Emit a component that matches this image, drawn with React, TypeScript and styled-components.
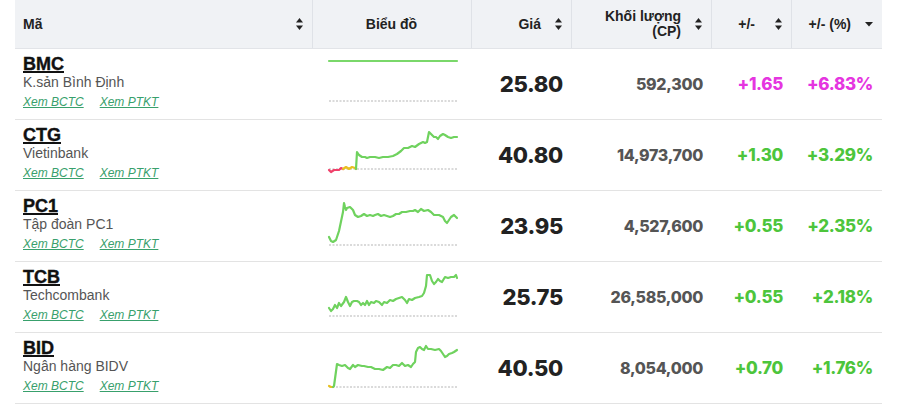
import React from "react";
import styled, { createGlobalStyle } from "styled-components";

const GlobalStyle = createGlobalStyle`
  html, body {
    margin: 0;
    padding: 0;
    background: #ffffff;
  }
  body {
    font-family: "Liberation Sans", Arial, sans-serif;
    color: #222;
  }
`;

const columns = "298px 159px 100px 140px 80px 90px";

const Page = styled.div`
  padding-left: 15px;
`;

const Table = styled.div`
  width: 867px;
`;

const HeadRow = styled.div`
  display: grid;
  grid-template-columns: ${columns};
  height: 48px;
  background: #f0f2f5;
  border-bottom: 1px solid #e2e4e8;
`;

const HeadCell = styled.div<{ $align: "left" | "center" | "right"; $last?: boolean }>`
  display: flex;
  align-items: center;
  justify-content: ${(p) =>
    p.$align === "left" ? "space-between" : p.$align === "center" ? "center" : "flex-end"};
  gap: 14px;
  padding: 0 9px 0 8px;
  border-right: ${(p) => (p.$last ? "none" : "1px solid #dfe2e7")};
  font-size: 14px;
  font-weight: 700;
  color: #222;
`;

const HeadLabel = styled.span<{ $extra?: number }>`
  text-align: right;
  line-height: 15px;
  margin-right: ${(p) => p.$extra || 0}px;
`;

const Row = styled.div`
  display: grid;
  grid-template-columns: ${columns};
  height: 70px;
  border-bottom: 1px solid #e3e3e3;
`;

const NameCell = styled.div`
  padding: 5px 8px 0;
  display: flex;
  flex-direction: column;
`;

const Ticker = styled.a`
  font-size: 18px;
  line-height: 20px;
  font-weight: 700;
  color: #111;
  text-decoration: underline;
  text-decoration-thickness: 2px;
  text-underline-offset: 1px;
  align-self: flex-start;
  -webkit-text-stroke: 0.4px #111;
`;

const Company = styled.div`
  font-size: 14px;
  line-height: 16px;
  color: #555;
`;

const Links = styled.div`
  display: flex;
  gap: 16px;
  margin-top: 5px;
`;

const ReportLink = styled.a`
  font-size: 12px;
  line-height: 14px;
  font-style: italic;
  color: #38a06c;
  text-decoration: underline;
`;

const ChartCell = styled.div`
  display: flex;
  justify-content: center;
  padding-top: 10px;
`;

const NumCell = styled.div<{ $size: number; $color: string }>`
  display: flex;
  align-items: center;
  justify-content: flex-end;
  padding-right: 9px;
  font-family: Inter, "Liberation Sans", sans-serif;
  font-weight: 800;
  font-size: ${(p) => p.$size}px;
  color: ${(p) => p.$color};
  letter-spacing: -0.3px;
`;

const SortIcon = () => (
  <svg width="7" height="12" viewBox="0 0 7 12">
    <path d="M3.5 0 L7 4.5 L0 4.5 Z" fill="#222" />
    <path d="M3.5 12 L7 7.5 L0 7.5 Z" fill="#222" />
  </svg>
);

const CaretDown = () => (
  <svg width="8" height="5" viewBox="0 0 8 5">
    <path d="M0 0 L8 0 L4 4.5 Z" fill="#222" />
  </svg>
);

type Pt = [number, number];
type Segment = { color: string; points: Pt[] };

const Sparkline: React.FC<{ segments: Segment[]; base: number }> = ({ segments, base }) => (
  <svg width="132" height="50" viewBox="0 0 132 50">
    <line x1="2" x2="130" y1={base} y2={base} stroke="#b5b5b5" strokeWidth="1" strokeDasharray="2 1.5" />
    {segments.map((s, i) => (
      <polyline
        key={i}
        points={s.points.map((p) => p.join(",")).join(" ")}
        fill="none"
        stroke={s.color}
        strokeWidth="2.2"
        strokeLinejoin="round"
        strokeLinecap="round"
      />
    ))}
  </svg>
);

const GREEN_LINE = "#6fd25e";
const UP = "#4dc53c";
const CEIL = "#e535e0";

type Stock = {
  code: string;
  name: string;
  price: string;
  volume: string;
  change: string;
  pct: string;
  color: string;
  base: number;
  segments: Segment[];
};

const stocks: Stock[] = [
  {
    code: "BMC",
    name: "K.sản Bình Định",
    price: "25.80",
    volume: "592,300",
    change: "+1.65",
    pct: "+6.83%",
    color: CEIL,
    base: 42,
    segments: [{ color: "#7ad86a", points: [[2, 2], [130, 2]] }],
  },
  {
    code: "CTG",
    name: "Vietinbank",
    price: "40.80",
    volume: "14,973,700",
    change: "+1.30",
    pct: "+3.29%",
    color: UP,
    base: 39,
    segments: [
      { color: "#f0406a", points: [[2, 40], [4, 42], [7, 40], [12, 40], [14, 38], [16, 39]] },
      { color: "#e8c020", points: [[16, 39], [19, 37], [22, 39], [25, 37], [28, 38], [29, 39]] },
      {
        color: GREEN_LINE,
        points: [
          [29, 39], [30, 22], [32, 25], [35, 27], [38, 27], [40, 28], [43, 27], [48, 27], [52, 28],
          [56, 27], [61, 27], [66, 26], [70, 24], [74, 21], [77, 18], [81, 18], [85, 16], [88, 17],
          [92, 14], [96, 12], [98, 13], [100, 12], [102, 2], [104, 4], [107, 7], [109, 7], [111, 9],
          [113, 6], [116, 4], [118, 5], [121, 7], [124, 8], [127, 7], [130, 7],
        ],
      },
    ],
  },
  {
    code: "PC1",
    name: "Tập đoàn PC1",
    price: "23.95",
    volume: "4,527,600",
    change: "+0.55",
    pct: "+2.35%",
    color: UP,
    base: 44,
    segments: [
      {
        color: GREEN_LINE,
        points: [
          [2, 36], [4, 40], [6, 41], [9, 39], [12, 30], [16, 11], [17, 2], [18, 6], [19, 9], [20, 7],
          [23, 6], [26, 9], [28, 14], [31, 16], [34, 15], [37, 13], [40, 15], [43, 14], [46, 15],
          [48, 14], [51, 13], [54, 15], [57, 14], [60, 15], [63, 16], [66, 15], [69, 13], [72, 13],
          [75, 11], [79, 11], [83, 10], [86, 10], [88, 9], [91, 11], [94, 8], [97, 10], [101, 9],
          [104, 11], [107, 14], [112, 14], [116, 16], [118, 20], [120, 22], [122, 19], [124, 16],
          [127, 14], [130, 17],
        ],
      },
    ],
  },
  {
    code: "TCB",
    name: "Techcombank",
    price: "25.75",
    volume: "26,585,000",
    change: "+0.55",
    pct: "+2.18%",
    color: UP,
    base: 44,
    segments: [
      {
        color: GREEN_LINE,
        points: [
          [2, 36], [4, 39], [6, 37], [8, 33], [10, 36], [12, 31], [14, 34], [17, 30], [19, 25],
          [21, 30], [23, 34], [25, 30], [27, 29], [30, 29], [32, 30], [34, 33], [36, 31], [38, 33],
          [40, 29], [42, 33], [44, 30], [47, 31], [49, 29], [52, 30], [55, 33], [57, 30], [60, 31],
          [63, 28], [66, 29], [69, 27], [72, 26], [75, 25], [78, 28], [80, 31], [82, 27], [85, 28],
          [88, 26], [92, 25], [95, 24], [97, 21], [99, 14], [100, 3], [103, 3], [105, 9], [107, 12],
          [109, 10], [111, 7], [113, 9], [115, 10], [118, 5], [121, 6], [124, 5], [127, 5], [129, 3],
          [130, 6],
        ],
      },
    ],
  },
  {
    code: "BID",
    name: "Ngân hàng BIDV",
    price: "40.50",
    volume: "8,054,000",
    change: "+0.70",
    pct: "+1.76%",
    color: UP,
    base: 44,
    segments: [
      { color: "#e8c020", points: [[2, 43], [4, 44], [6, 44]] },
      {
        color: GREEN_LINE,
        points: [
          [6, 44], [7, 43], [10, 21], [12, 22], [15, 23], [18, 22], [21, 25], [23, 26], [26, 22],
          [28, 24], [31, 22], [35, 23], [37, 23], [41, 24], [44, 24], [48, 26], [52, 26], [56, 27],
          [60, 24], [63, 25], [66, 22], [69, 22], [72, 23], [75, 20], [78, 23], [81, 22], [84, 24],
          [86, 21], [88, 19], [89, 9], [91, 5], [93, 4], [95, 6], [97, 7], [99, 3], [101, 6],
          [104, 6], [108, 7], [112, 6], [114, 8], [116, 11], [118, 14], [120, 13], [122, 11],
          [125, 10], [127, 9], [130, 7],
        ],
      },
    ],
  },
];

const App: React.FC = () => (
  <Page>
    <GlobalStyle />
    <Table>
      <HeadRow>
        <HeadCell $align="left">
          <HeadLabel>Mã</HeadLabel>
          <SortIcon />
        </HeadCell>
        <HeadCell $align="center">
          <HeadLabel>Biểu đồ</HeadLabel>
        </HeadCell>
        <HeadCell $align="right">
          <HeadLabel>Giá</HeadLabel>
          <SortIcon />
        </HeadCell>
        <HeadCell $align="right">
          <HeadLabel>
            Khối lượng
            <br />
            (CP)
          </HeadLabel>
          <SortIcon />
        </HeadCell>
        <HeadCell $align="right">
          <HeadLabel $extra={6}>+/-</HeadLabel>
          <SortIcon />
        </HeadCell>
        <HeadCell $align="right" $last>
          <HeadLabel>+/- (%)</HeadLabel>
          <CaretDown />
        </HeadCell>
      </HeadRow>
      {stocks.map((s) => (
        <Row key={s.code}>
          <NameCell>
            <Ticker>{s.code}</Ticker>
            <Company>{s.name}</Company>
            <Links>
              <ReportLink>Xem BCTC</ReportLink>
              <ReportLink>Xem PTKT</ReportLink>
            </Links>
          </NameCell>
          <ChartCell>
            <Sparkline segments={s.segments} base={s.base} />
          </ChartCell>
          <NumCell $size={22} $color="#222">{s.price}</NumCell>
          <NumCell $size={16} $color="#555">{s.volume}</NumCell>
          <NumCell $size={17} $color={s.color}>{s.change}</NumCell>
          <NumCell $size={17} $color={s.color}>{s.pct}</NumCell>
        </Row>
      ))}
    </Table>
  </Page>
);

export default App;
